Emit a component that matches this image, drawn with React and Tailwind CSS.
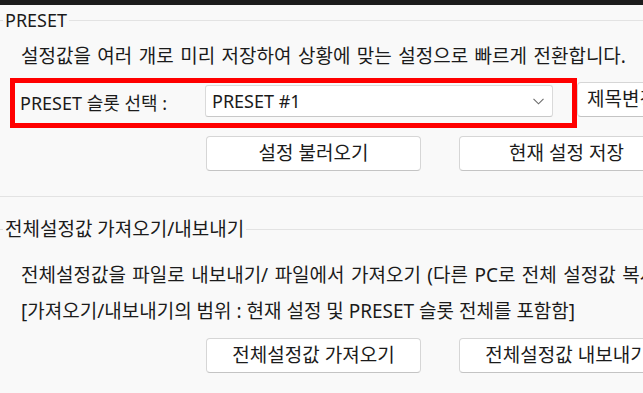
import React from "react";

const font = { fontFamily: '"Noto Sans", "Noto Sans CJK KR", sans-serif' };

function GroupHeader({ title, size = "text-[18px]" }) {
  return (
    <div className="flex items-center h-[30px]">
      <div className="w-[3px] h-px bg-[#dcdcdc]" />
      <span className={"px-[2px] text-[#1b1b1b] leading-none whitespace-nowrap " + size}>{title}</span>
      <div className="flex-1 h-px bg-[#e3e3e3]" />
    </div>
  );
}

function Button({ children, className = "" }) {
  return (
    <button
      className={
        "h-[35px] bg-white border border-[#d6d6d6] border-b-[#c4c4c4] rounded-[4px] text-[19px] text-[#1b1b1b] flex items-center justify-center shrink-0 whitespace-nowrap " +
        className
      }
    >
      {children}
    </button>
  );
}

export default function App() {
  return (
    <div
      className="w-[643px] h-[393px] bg-[#f9f9f9] overflow-hidden text-[#1b1b1b]"
      style={font}
    >
      <div className="h-[5px] bg-[#1c1c1c]" />

      {/* PRESET group */}
      <GroupHeader title="PRESET" />
      <div className="h-[43px] flex items-center pl-[21px] text-[19px] whitespace-nowrap [word-spacing:1.5px]">
        설정값을 여러 개로 미리 저장하여 상황에 맞는 설정으로 빠르게 전환합니다.
      </div>

      <div className="h-[50px] flex items-start">
        <div className="ml-[10px] w-[567px] h-[50px] border-[5px] border-[#ff0000] flex items-center shrink-0">
          <span className="pl-[5px] w-[190px] text-[18px] whitespace-nowrap">PRESET 슬롯 선택 :</span>
          <div className="w-[348px] h-[32px] bg-white border border-[#dadada] border-b-[#c8c8c8] rounded-[3px] flex items-center justify-between pl-[6px] pr-[8px] -mt-[4px]">
            <span className="text-[18px]">PRESET #1</span>
            <svg width="11" height="7" viewBox="0 0 11 7" fill="none">
              <path d="M0.5 0.8l5 5 5-5" stroke="#6b6b6b" strokeWidth="1.1" />
            </svg>
          </div>
        </div>
        <Button className="w-[100px] h-[34px] mt-[4px] justify-start pl-[9px] rounded-r-none">
          제목변경
        </Button>
      </div>

      <div className="flex pl-[206px] gap-[38px] mt-[8px]">
        <Button className="w-[215px]">설정 불러오기</Button>
        <Button className="w-[215px]">현재 설정 저장</Button>
      </div>

      <div className="mt-[25px] h-px bg-[#e3e3e3]" />

      {/* Import / export group */}
      <div className="mt-[17px]">
        <GroupHeader title="전체설정값 가져오기/내보내기" size="text-[19px]" />
      </div>
      <div className="pl-[21px] text-[19px] whitespace-nowrap mt-[13px]">
        <div className="h-[36px] flex items-center [word-spacing:1.5px]">
          전체설정값을 파일로 내보내기/ 파일에서 가져오기 (다른 PC로 전체 설정값 복사)
        </div>
        <div className="h-[36px] flex items-center">
          [가져오기/내보내기의 범위 : 현재 설정 및 PRESET 슬롯 전체를 포함함]
        </div>
      </div>
      <div className="flex pl-[206px] gap-[38px] mt-[9px]">
        <Button className="w-[215px] h-[34px]">전체설정값 가져오기</Button>
        <Button className="w-[215px] h-[34px]">전체설정값 내보내기</Button>
      </div>
    </div>
  );
}
